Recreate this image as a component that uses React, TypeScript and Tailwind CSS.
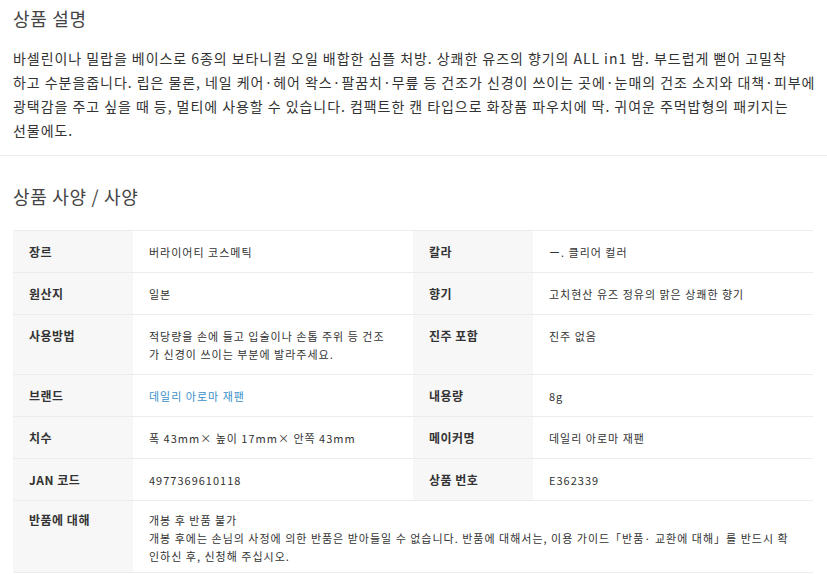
import React from "react";

const F = { fontFamily: '"Noto Sans CJK KR", "Noto Sans", sans-serif' };

function Label({ children, className = "" }: { children: React.ReactNode; className?: string }) {
  return (
    <div className={`bg-[#f7f7f7] px-4 pt-[12px] pb-[11px] text-[12px] leading-[18px] font-bold text-[#333] tracking-[0.5px] ${className}`}>
      {children}
    </div>
  );
}

function Value({ children, className = "" }: { children: React.ReactNode; className?: string }) {
  return (
    <div className={`px-4 pt-[12px] pb-[11px] text-[11px] leading-[18px] text-[#333] tracking-[1px] ${className}`}>
      {children}
    </div>
  );
}

function Row({ children }: { children: React.ReactNode }) {
  return (
    <div className="grid grid-cols-[120px_280px_120px_280px] border-b border-[#ececec]">{children}</div>
  );
}

function L({ children }: { children: React.ReactNode }) {
  return <span className="block whitespace-nowrap">{children}</span>;
}

export default function App() {
  return (
    <div className="w-[827px] h-[574px] overflow-hidden bg-white" style={F}>
      <div className="px-[13px] pt-[6px] pb-[13px]">
        <h2 className="text-[18px] leading-[24px] text-[#444] font-normal tracking-[0.7px]">상품 설명</h2>
        <p className="mt-[16px] text-[14px] leading-[24px] text-[#333] tracking-[0.95px]">
          <L>바셀린이나 밀랍을 베이스로 6종의 보타니컬 오일 배합한 심플 처방. 상쾌한 유즈의 향기의 ALL in1 밤. 부드럽게 뻗어 고밀착</L>
          <L>하고 수분을줍니다. 립은 물론, 네일 케어·헤어 왁스·팔꿈치·무릎 등 건조가 신경이 쓰이는 곳에·눈매의 건조 소지와 대책·피부에</L>
          <L>광택감을 주고 싶을 때 등, 멀티에 사용할 수 있습니다. 컴팩트한 캔 타입으로 화장품 파우치에 딱. 귀여운 주먹밥형의 패키지는</L>
          <L>선물에도.</L>
        </p>
      </div>
      <div className="border-t border-[#ececec]" />
      <div className="px-[13px] pt-[28px]">
        <h2 className="text-[18px] leading-[24px] text-[#444] font-normal tracking-[0.7px]">상품 사양 / 사양</h2>
        <div className="mt-[22px] w-[800px] border-t border-[#ececec]">
          <Row>
            <Label>장르</Label>
            <Value>버라이어티 코스메틱</Value>
            <Label>칼라</Label>
            <Value>ー. 클리어 컬러</Value>
          </Row>
          <Row>
            <Label>원산지</Label>
            <Value>일본</Value>
            <Label>향기</Label>
            <Value>고치현산 유즈 정유의 맑은 상쾌한 향기</Value>
          </Row>
          <Row>
            <Label>사용방법</Label>
            <Value>
              <L>적당량을 손에 들고 입술이나 손톱 주위 등 건조</L>
              <L>가 신경이 쓰이는 부분에 발라주세요.</L>
            </Value>
            <Label>진주 포함</Label>
            <Value>진주 없음</Value>
          </Row>
          <Row>
            <Label>브랜드</Label>
            <Value className="!text-[#3a8fc9]">데일리 아로마 재팬</Value>
            <Label>내용량</Label>
            <Value>8g</Value>
          </Row>
          <Row>
            <Label>치수</Label>
            <Value>폭 43mm× 높이 17mm× 안쪽 43mm</Value>
            <Label>메이커명</Label>
            <Value>데일리 아로마 재팬</Value>
          </Row>
          <Row>
            <Label>JAN 코드</Label>
            <Value>4977369610118</Value>
            <Label>상품 번호</Label>
            <Value>E362339</Value>
          </Row>
          <div className="grid grid-cols-[120px_680px] border-b border-[#ececec]">
            <Label className="!pt-[10px] !pb-[7px]">반품에 대해</Label>
            <Value className="!pt-[10px] !pb-[7px]">
              <L>개봉 후 반품 불가</L>
              <L>개봉 후에는 손님의 사정에 의한 반품은 받아들일 수 없습니다. 반품에 대해서는, 이용 가이드「반품· 교환에 대해」를 반드시 확</L>
              <L>인하신 후, 신청해 주십시오.</L>
            </Value>
          </div>
        </div>
      </div>
    </div>
  );
}
